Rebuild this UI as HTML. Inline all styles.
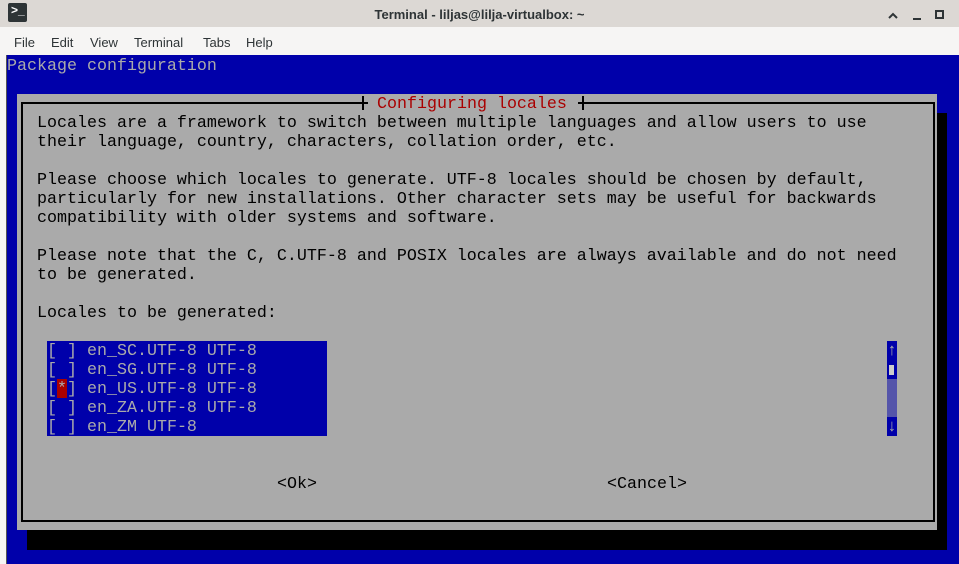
<!DOCTYPE html>
<html><head><style>
*{margin:0;padding:0;box-sizing:border-box}
body{width:959px;height:564px;overflow:hidden;background:#f6f5f4;position:relative;font-family:"Liberation Sans",sans-serif}
.a{position:absolute}
.m{font-family:"Liberation Mono",monospace;font-size:16.67px;line-height:19px;white-space:pre;position:absolute;margin-top:1px}
</style></head><body>
<div class="a" style="left:0;top:0;width:959px;height:28px;background:#dcd8d4"></div>
<div class="a" style="left:8px;top:3px;width:19px;height:19px;background:#2e3436;border-radius:2px"></div>
<div class="a" style="left:11px;top:3px;color:#fff;font-size:12px;font-weight:bold">&gt;_</div>
<div class="a" style="left:0;top:7px;width:959px;text-align:center;font-size:13px;font-weight:bold;color:#2e3436">Terminal - liljas@lilja-virtualbox: ~</div>
<svg class="a" style="left:885px;top:8px" width="74" height="14"><path d="M4 10 L8 6 L12 10" stroke="#2e3436" stroke-width="2" fill="none"/><path d="M28 11 H36" stroke="#2e3436" stroke-width="2"/><rect x="51" y="3" width="7" height="7" stroke="#2e3436" stroke-width="2" fill="none"/></svg>
<div class="a" style="left:0;top:27px;width:959px;height:28px;background:#f6f5f4;font-size:13px;color:#2e3436">
<span class="a" style="left:14px;top:8px">File</span><span class="a" style="left:51px;top:8px">Edit</span><span class="a" style="left:90px;top:8px">View</span><span class="a" style="left:134px;top:8px">Terminal</span><span class="a" style="left:203px;top:8px">Tabs</span><span class="a" style="left:246px;top:8px">Help</span></div>
<div class="a" style="left:6px;top:55px;width:953px;height:509px;background:#0000aa;border-left:1px solid #555"></div>
<div class="m" style="left:7px;top:56px;color:#aaa">Package configuration</div>
<div class="a" style="left:27px;top:113px;width:920px;height:437px;background:#000"></div>
<div class="a" style="left:17px;top:94px;width:920px;height:436px;background:#aaa"></div>
<div class="a" style="left:21px;top:102px;width:914px;height:420px;border:2px solid #000"></div>
<div class="a" style="left:362px;top:96px;width:222px;height:14px;background:#aaa;border-left:2px solid #000;border-right:2px solid #000"></div>
<div class="a" style="left:362px;top:102px;width:6px;height:2px;background:#000"></div>
<div class="a" style="left:578px;top:102px;width:6px;height:2px;background:#000"></div>
<div class="m" style="left:377px;top:94px;color:#aa0000">Configuring locales</div>
<div class="m" style="left:37px;top:113px;color:#000">Locales are a framework to switch between multiple languages and allow users to use
their language, country, characters, collation order, etc.

Please choose which locales to generate. UTF-8 locales should be chosen by default,
particularly for new installations. Other character sets may be useful for backwards
compatibility with older systems and software.

Please note that the C, C.UTF-8 and POSIX locales are always available and do not need
to be generated.

Locales to be generated:</div>
<div class="a" style="left:47px;top:341px;width:280px;height:95px;background:#0000aa"></div>
<div class="a" style="left:57px;top:379px;width:10px;height:19px;background:#aa0000"></div>
<div class="m" style="left:47px;top:341px;color:#aaa">[ ] en_SC.UTF-8 UTF-8
[ ] en_SG.UTF-8 UTF-8
[*] en_US.UTF-8 UTF-8
[ ] en_ZA.UTF-8 UTF-8
[ ] en_ZM UTF-8</div>
<div class="a" style="left:887px;top:341px;width:10px;height:95px;background:#0000aa"></div>
<div class="a" style="left:887px;top:379px;width:10px;height:38px;background:#5555aa"></div>
<div class="a" style="left:889px;top:365px;width:5px;height:10px;background:#ccc"></div>
<div class="m" style="left:887px;top:341px;color:#aaa">↑</div>
<div class="m" style="left:887px;top:417px;color:#aaa">↓</div>
<div class="m" style="left:277px;top:474px;color:#000">&lt;Ok&gt;</div>
<div class="m" style="left:607px;top:474px;color:#000">&lt;Cancel&gt;</div>
</body></html>
